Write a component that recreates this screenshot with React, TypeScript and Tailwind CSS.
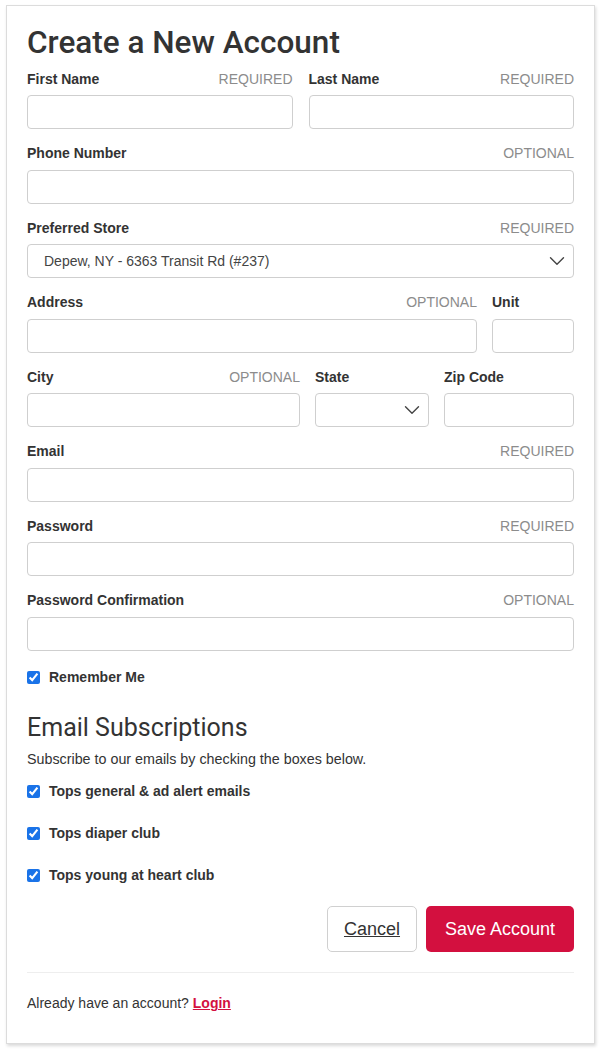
import { ChevronDown } from "lucide-react";

const font = { fontFamily: '"Liberation Sans", Arial, sans-serif' };

function FieldLabel({ label, note }: { label: string; note?: string }) {
  return (
    <div className="flex items-center justify-between h-5 mb-[6px]">
      <span className="text-[14px] font-bold text-[#333]">{label}</span>
      {note && <span className="text-[14px] text-[#8c8c8c] uppercase">{note}</span>}
    </div>
  );
}

function TextField({ label, note, className = "" }: { label: string; note?: string; className?: string }) {
  return (
    <div className={className}>
      <FieldLabel label={label} note={note} />
      <input className="block w-full h-[34px] rounded-[4px] border border-[#cfcfcf] bg-white px-3 text-[14px] outline-none" />
    </div>
  );
}

function SelectField({
  label,
  note,
  value,
  className = "",
}: {
  label: string;
  note?: string;
  value?: string;
  className?: string;
}) {
  return (
    <div className={className}>
      <FieldLabel label={label} note={note} />
      <div className="relative">
        <select
          defaultValue={value ?? ""}
          className="block w-full h-[34px] appearance-none rounded-[4px] border border-[#cfcfcf] bg-white pl-4 pr-8 text-[14px] text-[#444] outline-none"
        >
          <option value={value ?? ""}>{value ?? ""}</option>
        </select>
        <ChevronDown
          size={26}
          strokeWidth={1.3}
          className="pointer-events-none absolute right-[4px] top-[4px] text-[#444]"
        />
      </div>
    </div>
  );
}

function Check({ label }: { label: string }) {
  return (
    <label className="flex items-center h-6 gap-[9px]">
      <input type="checkbox" defaultChecked className="m-0 w-[13px] h-[13px] accent-[#1a73e8]" />
      <span className="text-[14px] font-bold text-[#333]">{label}</span>
    </label>
  );
}

export default function App() {
  return (
    <div className="min-h-[1049px] bg-white pt-[5px]" style={font}>
      <div className="ml-[6px] w-[589px] border border-[#dcdcdc] bg-white pl-5 pr-[20px] pt-[19px] pb-[10px] shadow-[1px_2px_3px_rgba(0,0,0,0.15)]">
        <h1
          className="text-[31.5px] leading-[36px] font-medium text-[#333] mb-2"
          style={{ fontFamily: 'Roboto, "Liberation Sans", sans-serif' }}
        >
          Create a New Account
        </h1>

        <div className="flex flex-col gap-[14.5px]">
          <div className="grid grid-cols-2 gap-4">
            <TextField label="First Name" note="Required" />
            <TextField label="Last Name" note="Required" />
          </div>
          <TextField label="Phone Number" note="Optional" />
          <SelectField label="Preferred Store" note="Required" value="Depew, NY - 6363 Transit Rd (#237)" />
          <div className="flex gap-[15px]">
            <TextField label="Address" note="Optional" className="flex-1" />
            <TextField label="Unit" className="w-[82px]" />
          </div>
          <div className="flex gap-[15px]">
            <TextField label="City" note="Optional" className="flex-1" />
            <SelectField label="State" className="w-[114px]" />
            <TextField label="Zip Code" className="w-[130px]" />
          </div>
          <TextField label="Email" note="Required" />
          <TextField label="Password" note="Required" />
          <TextField label="Password Confirmation" note="Optional" />
          <Check label="Remember Me" />
        </div>

        <h2
          className="mt-[23px] text-[25px] leading-8 text-[#333]"
          style={{ fontFamily: 'Roboto, "Liberation Sans", sans-serif' }}
        >
          Email Subscriptions
        </h2>
        <p className="mt-[5px] text-[14.3px] leading-5 text-[#333]">Subscribe to our emails by checking the boxes below.</p>

        <div className="mt-[10px] flex flex-col gap-[18px]">
          <Check label="Tops general & ad alert emails" />
          <Check label="Tops diaper club" />
          <Check label="Tops young at heart club" />
        </div>

        <div className="mt-[19px] flex justify-end gap-[9px]">
          <button className="h-[46px] w-[90px] rounded-[5px] border border-[#d0d0d0] bg-white text-[18px] text-[#333] underline">
            Cancel
          </button>
          <button className="h-[46px] w-[148px] rounded-[5px] bg-[#d3103f] text-[18px] text-white">
            Save Account
          </button>
        </div>

        <div className="mt-5 border-t border-[#eeeeee]" />

        <p className="py-[20px] text-[14px] leading-5 text-[#333]">
          Already have an account?{" "}
          <a href="#" className="font-bold text-[#d3103f] underline">
            Login
          </a>
        </p>
      </div>
    </div>
  );
}
